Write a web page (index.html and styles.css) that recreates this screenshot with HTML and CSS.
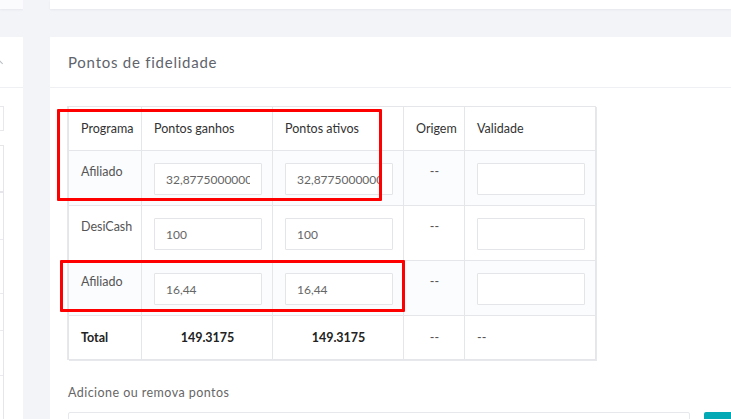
FILE: index.html
```html
<!DOCTYPE html>
<html lang="pt-BR">
<head>
<meta charset="utf-8">
<title>Pontos de fidelidade</title>
<link rel="stylesheet" href="styles.css">
</head>
<body>
<div class="page">
  <aside class="side">
    <div class="stub"></div>
    <div class="card side-card">
      <div class="side-head"><span class="chev"></span></div>
      <div class="side-body">
        <div class="side-input"></div>
        <div class="side-table">
          <div class="side-row r1"></div>
          <div class="side-row r2"></div>
          <div class="side-row r3"></div>
          <div class="side-row r4"></div>
          <div class="side-row r5"></div>
          <div class="side-row r6"></div>
        </div>
      </div>
    </div>
  </aside>

  <main class="main">
    <div class="stub"></div>
    <section class="card">
      <header class="card-head">
        <h2 class="card-title">Pontos de fidelidade</h2>
      </header>
      <div class="card-body">
        <div class="table-wrap">
          <table class="points">
            <colgroup>
              <col class="c-prog"><col class="c-wide"><col class="c-wide"><col class="c-orig"><col class="c-wide">
            </colgroup>
            <thead>
              <tr>
                <th>Programa</th>
                <th>Pontos ganhos</th>
                <th>Pontos ativos</th>
                <th class="center">Origem</th>
                <th>Validade</th>
              </tr>
            </thead>
            <tbody>
              <tr>
                <td>Afiliado</td>
                <td><input class="field" type="text" value="32,87750000000001"></td>
                <td><input class="field" type="text" value="32,87750000000001"></td>
                <td class="center">--</td>
                <td><input class="field" type="text" value=""></td>
              </tr>
              <tr>
                <td>DesiCash</td>
                <td><input class="field" type="text" value="100"></td>
                <td><input class="field" type="text" value="100"></td>
                <td class="center">--</td>
                <td><input class="field" type="text" value=""></td>
              </tr>
              <tr>
                <td>Afiliado</td>
                <td><input class="field" type="text" value="16,44"></td>
                <td><input class="field" type="text" value="16,44"></td>
                <td class="center">--</td>
                <td><input class="field" type="text" value=""></td>
              </tr>
            </tbody>
            <tfoot>
              <tr>
                <td>Total</td>
                <td class="center">149.3175</td>
                <td class="center">149.3175</td>
                <td class="center">--</td>
                <td>--</td>
              </tr>
            </tfoot>
          </table>
          <span class="mark mark-top"></span>
          <span class="mark mark-bottom"></span>
        </div>

        <p class="label">Adicione ou remova pontos</p>
        <div class="add-row">
          <div class="add-input"></div>
          <button class="add-btn" type="button"></button>
        </div>
      </div>
    </section>
  </main>
</div>
</body>
</html>
```

FILE: styles.css
```css
* { box-sizing: border-box; }

html, body {
  margin: 0;
  padding: 0;
}

body {
  width: 731px;
  height: 419px;
  overflow: hidden;
  background: #f3f4f8;
  font-family: "Lato", "Noto Sans", sans-serif;
  color: #333;
}

.page {
  display: flex;
  gap: 27px;
  height: 419px;
  overflow: hidden;
}

/* left column: only the right edge of its card is visible */
.side {
  width: 23px;
  flex: none;
  overflow: hidden;
}

.main {
  flex: 1;
  min-width: 0;
}

.stub {
  height: 9px;
  background: #fff;
  box-shadow: 0 1px 2px rgba(30, 40, 60, 0.06);
}

.side .stub { background: #fbfbfd; }

.card {
  margin-top: 28px;
  background: #fff;
  height: 382px;
}

.side-card { overflow: hidden; }

.side-head {
  height: 51px;
  border-bottom: 1px solid #eef0f3;
  position: relative;
}

.chev {
  position: absolute;
  left: -3px;
  top: 24px;
  width: 5px;
  height: 5px;
  border-left: 1px solid #b8bcc4;
  border-top: 1px solid #b8bcc4;
  transform: rotate(45deg);
}

.side-body {
  padding-top: 18px;
  margin-right: 19px;
  margin-left: -200px;
}

.side-input {
  height: 25px;
  border: 1px solid #e6e8ec;
}

.side-table {
  margin-top: 14px;
  border-right: 1px solid #e4e6ea;
  border-top: 1px solid #e4e6ea;
}

.side-row { border-bottom: 1px solid #e9ebef; }
.side-row.r1 { height: 47px; border-bottom: 2px solid #e4e6ea; }
.side-row.r2 { height: 47px; }
.side-row.r3 { height: 54px; }
.side-row.r4 { height: 37px; }
.side-row.r5 { height: 45px; }
.side-row.r6 { height: 60px; border-bottom: 0; }

/* main card */
.card-head {
  height: 51px;
  border-bottom: 1px solid #eef0f3;
  padding: 0 18px;
  display: flex;
  align-items: center;
}

.card-title {
  margin: 0;
  font-size: 15px;
  font-weight: 400;
  letter-spacing: 0.75px;
  color: #5f646c;
  padding-bottom: 1px;
}

.card-body {
  padding: 18px 18px 0;
}

.table-wrap {
  position: relative;
  width: 528px;
}

.points {
  border-collapse: collapse;
  table-layout: fixed;
  width: 528px;
  font-size: 12.5px;
  box-shadow: 1px 1px 0 #e6e8ec, -1px 0 0 #e6e8ec;
}

.c-prog { width: 73px; }
.c-wide { width: 131px; }
.c-orig { width: 61px; }

.points th,
.points td {
  border: 1px solid #e4e6ea;
  padding: 12px 11px 10px 12px;
  text-align: left;
  vertical-align: top;
  line-height: 18px;
  white-space: nowrap;
  overflow: hidden;
}

.points th {
  font-weight: 400;
  color: #333;
  height: 44px;
  vertical-align: middle;
  padding-top: 12px;
  padding-bottom: 11px;
}

.points td { color: #555; height: 54px; }

.points tbody tr:nth-child(odd) td { background: #fbfcfe; }

.points .center { text-align: center; }

.points tfoot td {
  height: 44px;
  vertical-align: middle;
  font-weight: 700;
  color: #222;
  padding-top: 12px;
  padding-bottom: 12px;
}

.points tfoot td:nth-child(4),
.points tfoot td:nth-child(5) { font-weight: 400; color: #555; }

.field {
  display: block;
  width: 108px;
  height: 32px;
  border: 1px solid #e3e5e9;
  border-radius: 1px;
  background: #fff;
  padding: 0 11px;
  font: inherit;
  font-size: 12px;
  color: #666;
  outline: none;
  margin: 0;
}

/* highlight frames drawn over the table */
.mark {
  position: absolute;
  border: 3px solid #ff0000;
  border-radius: 1px;
  pointer-events: none;
}

.mark-top {
  left: -11px;
  top: 3px;
  width: 325px;
  height: 92px;
}

.mark-bottom {
  left: -8px;
  top: 154px;
  width: 345px;
  height: 52px;
}

.label {
  margin: 24px 0 0;
  font-size: 12.5px;
  letter-spacing: 0.45px;
  color: #666;
  line-height: 18px;
}

.add-row {
  display: flex;
  gap: 14px;
  margin-top: 10px;
}

.add-input {
  width: 622px;
  flex: none;
  height: 34px;
  border: 1px solid #e6e8ec;
  border-radius: 2px;
}

.add-btn {
  width: 60px;
  flex: none;
  height: 34px;
  border: 0;
  border-radius: 2px;
  background: #03a9b4;
}
```
